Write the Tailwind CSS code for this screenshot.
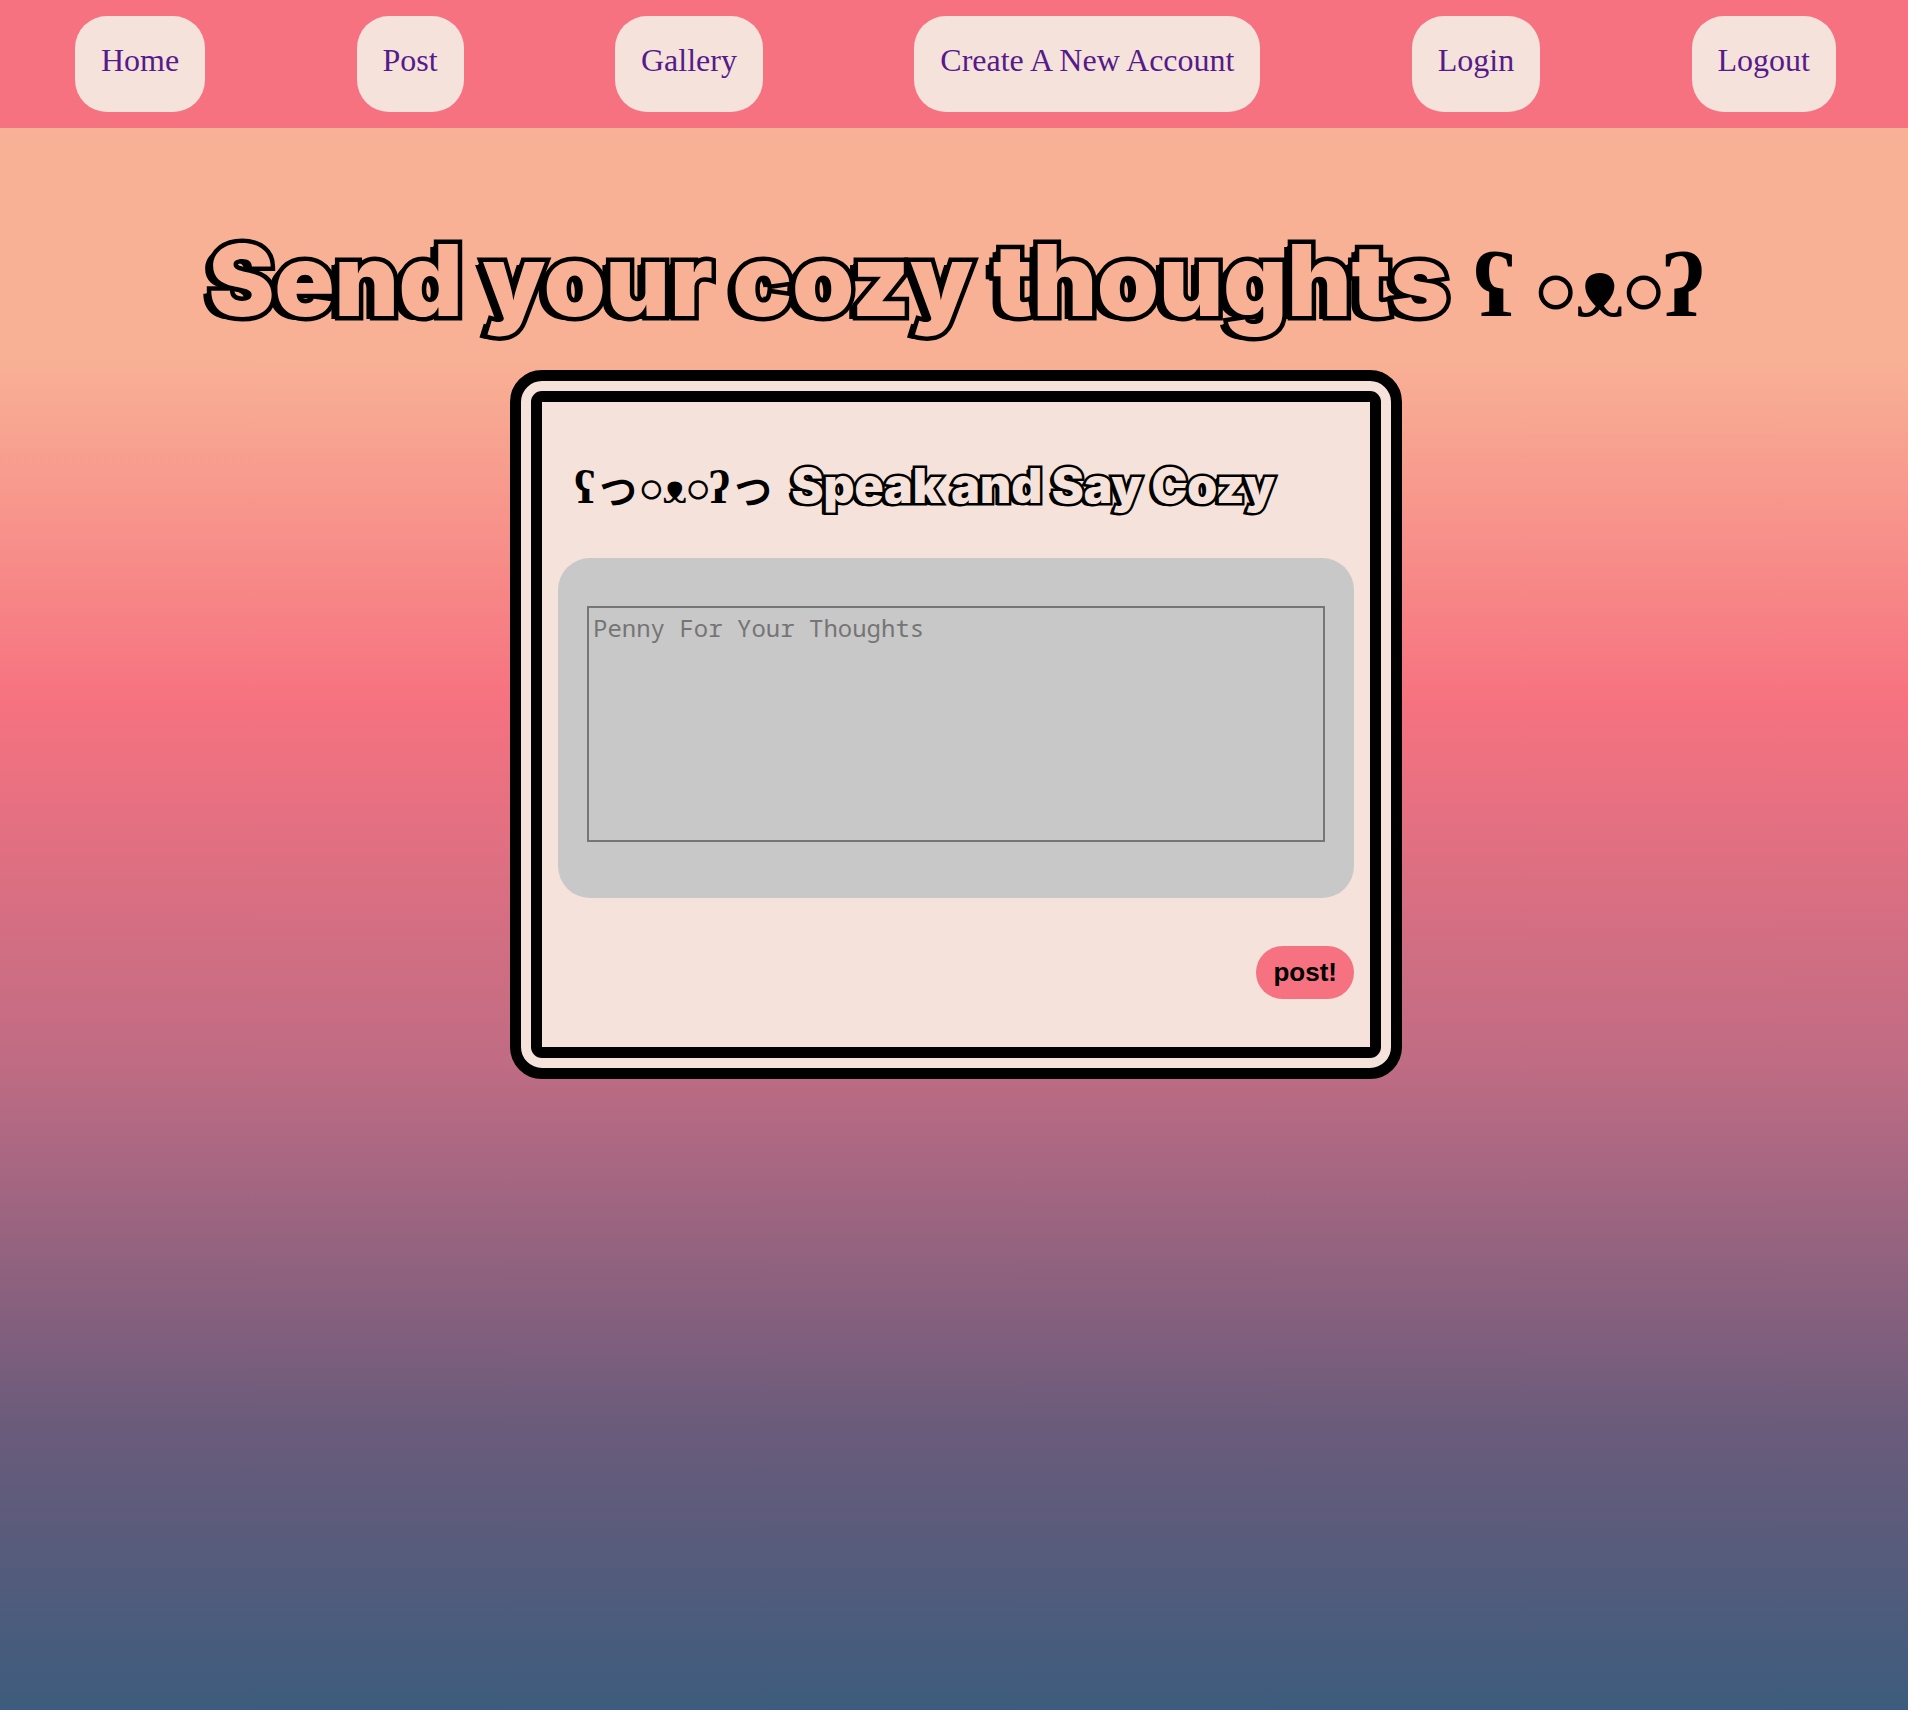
<!DOCTYPE html>
<html lang="en">
<head>
<meta charset="utf-8">
<title>Cozy Thoughts</title>
<script src="https://cdn.jsdelivr.net/npm/@tailwindcss/browser@4"></script>
</head>
<body class="min-h-screen bg-[linear-gradient(180deg,#f8b195_21%,#f67280_41%,#c06c84_62%,#6c5b7b_83%,#355c7d_103%)] font-['Liberation_Serif',serif] text-black">
<header class="bg-[#f67280] py-4">
  <nav class="flex justify-between pr-[72px] pl-[75px] text-[32px] leading-9 text-[#551a8b]">
    <a href="#" class="h-24 rounded-[32px] bg-[#f5e2da] px-[26px] pt-[26px]">Home</a>
    <a href="#" class="h-24 rounded-[32px] bg-[#f5e2da] px-[26px] pt-[26px]">Post</a>
    <a href="#" class="h-24 rounded-[32px] bg-[#f5e2da] px-[26px] pt-[26px]">Gallery</a>
    <a href="#" class="h-24 rounded-[32px] bg-[#f5e2da] px-[26px] pt-[26px]">Create A New Account</a>
    <a href="#" class="h-24 rounded-[32px] bg-[#f5e2da] px-[26px] pt-[26px]">Login</a>
    <a href="#" class="h-24 rounded-[32px] bg-[#f5e2da] px-[26px] pt-[26px]">Logout</a>
  </nav>
</header>
<main class="pt-[92px] pl-1">
  <h1 class="flex h-[120px] items-baseline justify-center gap-6 whitespace-nowrap text-[92px] leading-[120px]">
    <span class="font-['Inter',sans-serif] text-[99px] font-black text-[#f8b195] [-webkit-text-stroke:9px_#000] [paint-order:stroke_fill] [text-shadow:-1px_0_#000,-2px_1px_#000,-3px_1px_#000,-4px_2px_#000,-5px_2px_#000,-6px_3px_#000,-8px_3px_#000]">Send your cozy thoughts</span>
    <span class="font-bold">ʕ <span class="font-['Inter',sans-serif] text-[80px] text-[#f8b195] [-webkit-text-stroke:9px_#000] [paint-order:stroke_fill] [text-shadow:-2px_1px_#000,-4px_1px_#000]">•</span>ᴥ<span class="font-['Inter',sans-serif] text-[80px] text-[#f8b195] [-webkit-text-stroke:9px_#000] [paint-order:stroke_fill] [text-shadow:-2px_1px_#000,-4px_1px_#000]">•</span>ʔ</span>
  </h1>
  <form class="mx-auto mt-[30px] w-[892px] rounded-[32px] border-[32px] border-double border-black bg-[#f5e2da] px-4 pt-[56px] pb-12">
    <h2 class="flex h-[56px] items-baseline gap-4 whitespace-nowrap pl-4 text-[46px] leading-[56px]">
      <span class="font-['Liberation_Serif','Noto_Sans_CJK_JP',serif] font-bold">ʕ<span class="font-medium">っ</span><span class="font-['Inter',sans-serif] text-[#f5e2da] [-webkit-text-stroke:5px_#000] [paint-order:stroke_fill] [text-shadow:-1px_1px_#000,-2px_1px_#000]">•</span>ᴥ<span class="font-['Inter',sans-serif] text-[#f5e2da] [-webkit-text-stroke:5px_#000] [paint-order:stroke_fill] [text-shadow:-1px_1px_#000,-2px_1px_#000]">•</span>ʔ<span class="font-medium">っ</span></span>
      <label for="thought" class="font-['Inter',sans-serif] text-[48px] font-black text-[#f5e2da] [-webkit-text-stroke:5px_#000] [paint-order:stroke_fill] [text-shadow:-1px_1px_#000,-2px_1px_#000,-3px_1px_#000,-4px_2px_#000]">Speak and Say Cozy</label>
    </h2>
    <div class="mt-11 h-[340px] rounded-[32px] bg-[#c8c8c8] px-[29px] pt-12">
      <textarea id="thought" placeholder="Penny For Your Thoughts" class="block h-[236px] w-full resize-none border-2 border-[#767676] bg-transparent p-1 font-['Noto_Sans_Mono','DejaVu_Sans_Mono',monospace] text-[24px] leading-8 placeholder:text-[#757575]"></textarea>
    </div>
    <div class="mt-12 flex justify-end">
      <button type="submit" class="h-[53px] rounded-full bg-[#f67280] px-[17px] font-['Liberation_Sans',sans-serif] text-[26px] font-bold">post!</button>
    </div>
  </form>
</main>
</body>
</html>
